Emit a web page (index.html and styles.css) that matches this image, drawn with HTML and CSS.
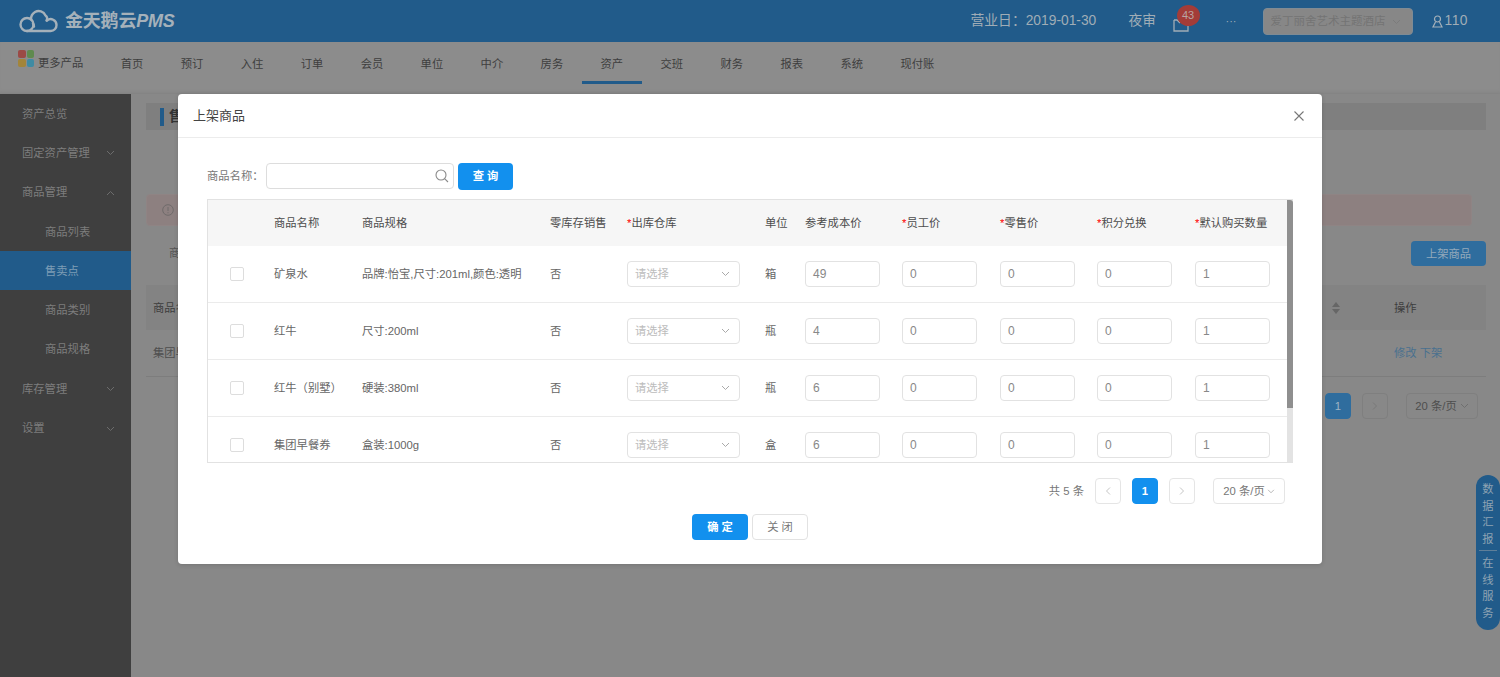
FILE: index.html
```html
<!DOCTYPE html>
<html lang="zh-CN">
<head>
<meta charset="utf-8">
<title>金天鹅云PMS</title>
<link rel="stylesheet" href="styles.css">
</head>
<body>
<div class="app">
  <header class="topbar">
    <div class="logo">
      <svg class="logo-icon" width="39" height="24" viewBox="0 0 39 24" fill="none" stroke="#a5b1ba" stroke-width="2.400" stroke-linecap="round"><circle cx="8" cy="15.500" r="6.500"/><path d="M12 10.500a8.500 8.500 0 0 1 4-7.500 7.500 7.500 0 0 1 10.500 3.500 3.500 3.500 0 0 1 1 5"/><path d="M28 11.500a5.800 5.800 0 0 1 9.500 4.500 5.800 5.800 0 0 1-5.800 6H8"/><path d="M14 14.500a6.500 6.500 0 0 1 1 3"/></svg>
      <span class="logo-text">金天鹅云<i>PMS</i></span>
    </div>
    <div class="top-right">
      <span class="bizdate">营业日：2019-01-30</span>
      <span class="audit">夜审</span>
      <span class="inbox">
        <svg width="16" height="15" viewBox="0 0 16 15" fill="none" stroke="#a0adb6" stroke-width="1.300"><path d="M1 3v11h14V5"/><path d="M1 3h3l3 3"/></svg>
        <b class="badge">43</b>
      </span>
      <span class="more">···</span>
      <span class="hotel"><span class="hotel-name">爱丁丽舍艺术主题酒店</span><svg class="chev" width="9" height="6" viewBox="0 0 9 6" fill="none" stroke="#7b7b7b"><path d="M1 1l3.500 3.500L8 1"/></svg></span>
      <span class="user">
        <svg width="11" height="13" viewBox="0 0 11 13" fill="none" stroke="#a5b1ba" stroke-width="1.200"><circle cx="5.500" cy="4" r="3"/><path d="M3.500 7L1 12h9L7.500 7"/></svg>
        <span>110</span>
      </span>
    </div>
  </header>

  <nav class="navbar">
    <div class="more-products">
      <span class="tiles"><i class="t1"></i><i class="t2"></i><i class="t3"></i><i class="t4"></i></span>
      <span>更多产品</span>
    </div>
    <ul class="navlist">
      <li>首页</li><li>预订</li><li>入住</li><li>订单</li><li>会员</li><li>单位</li><li>中介</li><li>房务</li><li class="active">资产</li><li>交班</li><li>财务</li><li>报表</li><li>系统</li><li>现付账</li>
    </ul>
  </nav>

  <div class="workspace">
    <aside class="sidebar">
      <div class="side-item">资产总览</div>
      <div class="side-item">固定资产管理<svg class="chev" width="9" height="6" viewBox="0 0 9 6" fill="none" stroke="#6c6c6c"><path d="M1 1l3.500 3.500L8 1"/></svg></div>
      <div class="side-item">商品管理<svg class="chev" width="9" height="6" viewBox="0 0 9 6" fill="none" stroke="#6c6c6c"><path d="M1 5l3.500-3.500L8 5"/></svg></div>
      <div class="side-item sub">商品列表</div>
      <div class="side-item sub on">售卖点</div>
      <div class="side-item sub">商品类别</div>
      <div class="side-item sub">商品规格</div>
      <div class="side-item">库存管理<svg class="chev" width="9" height="6" viewBox="0 0 9 6" fill="none" stroke="#6c6c6c"><path d="M1 1l3.500 3.500L8 1"/></svg></div>
      <div class="side-item">设置<svg class="chev" width="9" height="6" viewBox="0 0 9 6" fill="none" stroke="#6c6c6c"><path d="M1 1l3.500 3.500L8 1"/></svg></div>
    </aside>
    <main class="content">
      <div class="page-title"><span class="title-mark"></span><strong>售卖点</strong></div>
      <div class="alert"><svg width="12" height="12" viewBox="0 0 12 12" fill="none" stroke="#6f6a6a"><circle cx="6" cy="6" r="5.300"/><path d="M6 3v4M6 8.200v1"/></svg></div>
      <div class="toolbar"><span class="tool-label">商品名称</span><span class="list-btn">上架商品</span></div>
      <div class="list-head"><span>商品名称</span><span class="sort"><i class="up"></i><i class="down"></i></span><span class="ops">操作</span></div>
      <div class="list-row"><span>集团早餐券</span><span class="ops link">修改 下架</span></div>
      <div class="list-pager">
        <span class="lp lp-on">1</span>
        <span class="lp"><svg width="6" height="8" viewBox="0 0 6 8" fill="none" stroke="#787878"><path d="M1 .500L4.500 4 1 7.500"/></svg></span>
        <span class="lp lp-size">20 条/页<svg width="9" height="6" viewBox="0 0 9 6" fill="none" stroke="#6f6f6f"><path d="M1 1l3.500 3.500L8 1"/></svg></span>
      </div>
    </main>
  </div>

  <div class="float-pill">
    <span>数</span><span>据</span><span>汇</span><span>报</span><hr>
    <span>在</span><span>线</span><span>服</span><span>务</span>
  </div>

  <section class="modal">
    <div class="modal-head">
      <span>上架商品</span>
      <svg width="10" height="10" viewBox="0 0 10 10" stroke="#777" stroke-width="1.100"><path d="M.500.500l9 9M9.500.500l-9 9"/></svg>
    </div>
    <div class="modal-body">
      <div class="search">
        <label class="search-label">商品名称：</label>
        <span class="search-input"><svg width="14" height="14" viewBox="0 0 14 14" fill="none" stroke="#8a8a8a" stroke-width="1.100"><circle cx="6" cy="6" r="5"/><path d="M9.600 9.600L13 13"/></svg></span>
        <span class="btn primary search-btn">查 询</span>
      </div>
      <div class="table-wrap">
        <div class="table-scroll">
          <div class="row head">
            <span></span><span>商品名称</span><span>商品规格</span><span>零库存销售</span><span><em>*</em>出库仓库</span><span>单位</span><span>参考成本价</span><span><em>*</em>员工价</span><span><em>*</em>零售价</span><span><em>*</em>积分兑换</span><span><em>*</em>默认购买数量</span>
          </div>
          <div class="row">
            <span class="check"></span><span>矿泉水</span><span>品牌:怡宝,尺寸:201ml,颜色:透明</span><span>否</span>
            <span class="select">请选择<svg width="9" height="6" viewBox="0 0 9 6" fill="none" stroke="#aaa"><path d="M1 1l3.500 3.500L8 1"/></svg></span>
            <span>箱</span><span class="num">49</span><span class="num">0</span><span class="num">0</span><span class="num">0</span><span class="num">1</span>
          </div>
          <div class="row">
            <span class="check"></span><span>红牛</span><span>尺寸:200ml</span><span>否</span>
            <span class="select">请选择<svg width="9" height="6" viewBox="0 0 9 6" fill="none" stroke="#aaa"><path d="M1 1l3.500 3.500L8 1"/></svg></span>
            <span>瓶</span><span class="num">4</span><span class="num">0</span><span class="num">0</span><span class="num">0</span><span class="num">1</span>
          </div>
          <div class="row">
            <span class="check"></span><span>红牛（别墅）</span><span>硬装:380ml</span><span>否</span>
            <span class="select">请选择<svg width="9" height="6" viewBox="0 0 9 6" fill="none" stroke="#aaa"><path d="M1 1l3.500 3.500L8 1"/></svg></span>
            <span>瓶</span><span class="num">6</span><span class="num">0</span><span class="num">0</span><span class="num">0</span><span class="num">1</span>
          </div>
          <div class="row">
            <span class="check"></span><span>集团早餐券</span><span>盒装:1000g</span><span>否</span>
            <span class="select">请选择<svg width="9" height="6" viewBox="0 0 9 6" fill="none" stroke="#aaa"><path d="M1 1l3.500 3.500L8 1"/></svg></span>
            <span>盒</span><span class="num">6</span><span class="num">0</span><span class="num">0</span><span class="num">0</span><span class="num">1</span>
          </div>
        </div>
        <div class="scrollbar"><div class="thumb"></div></div>
      </div>
      <div class="pager">
        <span class="total">共 5 条</span>
        <span class="pg"><svg width="6" height="8" viewBox="0 0 6 8" fill="none" stroke="#c4c4c4"><path d="M5 .500L1.500 4 5 7.500"/></svg></span>
        <span class="pg cur">1</span>
        <span class="pg"><svg width="6" height="8" viewBox="0 0 6 8" fill="none" stroke="#c4c4c4"><path d="M1 .500L4.500 4 1 7.500"/></svg></span>
        <span class="pg size">20 条/页<svg width="8" height="5" viewBox="0 0 9 6" fill="none" stroke="#aaa"><path d="M1 1l3.500 3.500L8 1"/></svg></span>
      </div>
      <div class="modal-foot">
        <span class="btn primary">确 定</span>
        <span class="btn plain">关 闭</span>
      </div>
    </div>
  </section>
</div>
</body>
</html>
```
FILE: styles.css
```css
* { box-sizing: border-box; }
html, body { margin: 0; height: 100%; overflow: hidden; }
body { font: 11.300px/1.5 "Liberation Sans", "Noto Sans CJK SC", sans-serif; color: #4a4a4a; background: #888; }
ul { list-style: none; margin: 0; padding: 0; }
em, i { font-style: normal; }

.app { position: relative; width: 1500px; height: 677px; display: flex; flex-direction: column; overflow: hidden; }

.topbar { height: 42px; flex: none; background: #215b8a; display: flex; align-items: center; justify-content: space-between; padding: 0 32px 0 19px; color: #a0adb6; }
.logo { display: flex; align-items: center; gap: 7px; }
.logo-text { font-size: 18px; font-weight: 700; color: #a5b1ba; letter-spacing: -.2px; }
.logo-text i { font-style: italic; }
.top-right { display: flex; align-items: center; font-size: 13.800px; padding-top: 1px; }
.bizdate { width: 158px; }
.audit { width: 44px; }
.inbox { position: relative; display: flex; width: 53px; height: 15px; margin-top: 6px; }
.badge { position: absolute; left: 4px; top: -12px; width: 23px; height: 21px; border-radius: 50%; background: #a33c38; color: #b9a5a3; font-size: 11px; font-weight: 400; line-height: 20px; text-align: center; }
.more { width: 37px; font-size: 11px; }
.hotel { width: 150px; height: 27px; background: #878787; border: 1px solid #7f8b94; border-radius: 4px; display: flex; align-items: center; justify-content: space-between; padding: 0 11px 0 7px; color: #747474; font-size: 11.500px; }
.user { margin-left: 19px; display: flex; align-items: center; gap: 2px; letter-spacing: .5px; }

.navbar { height: 52px; flex: none; background: #8c8c8c; display: flex; box-shadow: inset 0 -4px 4px -3px #808080; color: #3e3e3e; }
.more-products { width: 102px; padding: 8px 0 0 18px; display: flex; align-items: flex-start; position: relative; }
.more-products > span:last-child { margin: 5px 0 0 4px; }
.tiles { width: 16px; height: 17px; display: grid; grid-template-columns: 1fr 1fr; gap: 1px; }
.tiles i { border-radius: 2px; }
.t1 { background: #9b4a46; }
.t2 { background: #5f8a4e; }
.t3 { background: #a3853a; }
.t4 { background: #3f8ba3; }
.navlist { display: flex; }
.navlist li { height: 42px; line-height: 44px; padding: 0 18.700px; text-align: center; }
.navlist li.active { border-bottom: 3px solid #215b8a; }

.workspace { flex: 1; display: flex; min-height: 0; }
.sidebar { width: 131px; flex: none; background: #3f3f3f; color: #7d7d7d; }
.side-item { height: 39.300px; padding: 1px 16px 0 22px; display: flex; align-items: center; justify-content: space-between; }
.side-item.sub { padding-left: 45px; }
.side-item.on { background: #215b8a; color: #7e9db5; }
.content { flex: 1; padding: 9px 14px 0 15px; min-width: 0; }
.page-title { height: 27px; background: #7f7f7f; display: flex; align-items: center; padding-left: 14px; gap: 5px; font-size: 14px; color: #333; }
.title-mark { width: 4px; height: 18px; background: #215b8a; }
.alert { margin: 64px 0 0; width: 1326px; height: 32px; background: #8d8080; border: 1px solid #8f8484; border-radius: 4px; padding: 0 0 0 15px; display: flex; align-items: center; }
.toolbar { margin-top: 15px; height: 25px; display: flex; justify-content: space-between; align-items: center; padding-left: 23px; color: #555; }
.list-btn { width: 75px; height: 25px; background: #2f6d9e; border-radius: 4px; color: #93a9bb; text-align: center; line-height: 26px; }
.list-head { margin-top: 19px; height: 45px; background: #838383; display: flex; align-items: center; padding: 1px 0 0 7px; color: #3e3e3e; position: relative; }
.sort { position: absolute; left: 1186px; width: 8px; display: flex; flex-direction: column; gap: 2px; }
.sort i { width: 0; height: 0; border-left: 4px solid transparent; border-right: 4px solid transparent; }
.sort .up { border-bottom: 5px solid #666; }
.sort .down { border-top: 5px solid #666; }
.ops { position: absolute; left: 1248px; }
.list-row { height: 47px; display: flex; align-items: center; padding-left: 7px; border-bottom: 1px solid #7d7d7d; position: relative; color: #4e4e4e; }
.link { color: #48708f; }
.list-pager { margin-top: 16px; display: flex; padding-left: 1179px; height: 26px; gap: 11px; }
.lp { width: 26px; height: 26px; border: 1px solid #7f7f7f; border-radius: 4px; display: flex; align-items: center; justify-content: center; color: #4e4e4e; }
.lp-on { background: #2f6d9e; border-color: #2f6d9e; color: #9fb4c4; }
.lp-size { width: 72px; margin-left: 7px; gap: 3px; }

.float-pill { position: absolute; right: 0; top: 475px; width: 24px; height: 155px; background: #215b8a; border-radius: 12px; color: #8ea3b3; display: flex; flex-direction: column; align-items: center; padding-top: 6px; line-height: 16.500px; }
.float-pill hr { width: 18px; height: 1px; margin: 3px 0 4px; border: 0; background: #5f7f99; }

.modal { position: absolute; left: 178px; top: 94px; width: 1144px; height: 470px; background: #fff; border-radius: 4px; box-shadow: 0 1px 4px rgba(0, 0, 0, .15); color: #666; }
.modal-head { height: 44px; border-bottom: 1px solid #ececec; display: flex; align-items: center; justify-content: space-between; padding: 1px 18px 0 15px; font-size: 13px; color: #444; }
.modal-body { padding: 25px 29px 0; }
.search { display: flex; align-items: flex-start; height: 27px; }
.search-label { width: 59px; height: 26px; line-height: 26px; color: #777; white-space: nowrap; }
.search-input { width: 188px; height: 26px; border: 1px solid #ddd; border-radius: 4px; display: flex; align-items: center; justify-content: flex-end; padding-right: 4px; }
.btn { width: 56px; height: 26px; border-radius: 4px; display: flex; align-items: center; justify-content: center; }
.primary { background: #1290ee; color: #fff; font-weight: 700; }
.plain { background: #fff; border: 1px solid #e2e2e2; color: #777; }
.search-btn { margin-left: 4px; width: 55px; height: 27px; }

.table-wrap { margin-top: 9px; height: 264px; display: flex; border: 1px solid #e2e2e2; border-right: 0; overflow: hidden; }
.table-scroll { flex: 1; min-width: 0; }
.scrollbar { width: 6px; flex: none; background: #e3e3e3; }
.thumb { height: 208px; background: #8f8f8f; border-radius: 0 3px 0 0; }
.row { height: 57px; display: grid; grid-template-columns: 66px 88px 188px 77px 138px 40px 97px 98px 97px 98px 92px; align-items: center; border-bottom: 1px solid #ebebeb; line-height: 19px; }
.row.head { height: 46px; background: #f6f6f6; color: #4d4d4d; border-bottom: 0; }
.row em { color: #f00; }
.check { width: 14px; height: 14px; margin-left: 22px; border: 1px solid #ddd; border-radius: 2px; }
.select, .num { height: 26px; border: 1px solid #e2e2e2; border-radius: 4px; display: flex; align-items: center; }
.select { width: 113px; padding: 0 9px 0 7px; justify-content: space-between; color: #bcbcbc; }
.num { width: 75px; padding-left: 7px; color: #888; font-size: 12px; }

.pager { margin-top: 15px; height: 26px; display: flex; align-items: center; justify-content: flex-end; padding-right: 8px; gap: 11px; }
.total { color: #777; }
.pg { width: 26px; height: 26px; border: 1px solid #e5e5e5; border-radius: 4px; display: flex; align-items: center; justify-content: center; color: #777; }
.pg.cur { background: #1290ee; border-color: #1290ee; color: #fff; font-weight: 700; }
.pg.size { width: 72px; margin-left: 7px; gap: 2px; }
.modal-foot { margin-top: 10px; display: flex; justify-content: center; gap: 4px; }
```
